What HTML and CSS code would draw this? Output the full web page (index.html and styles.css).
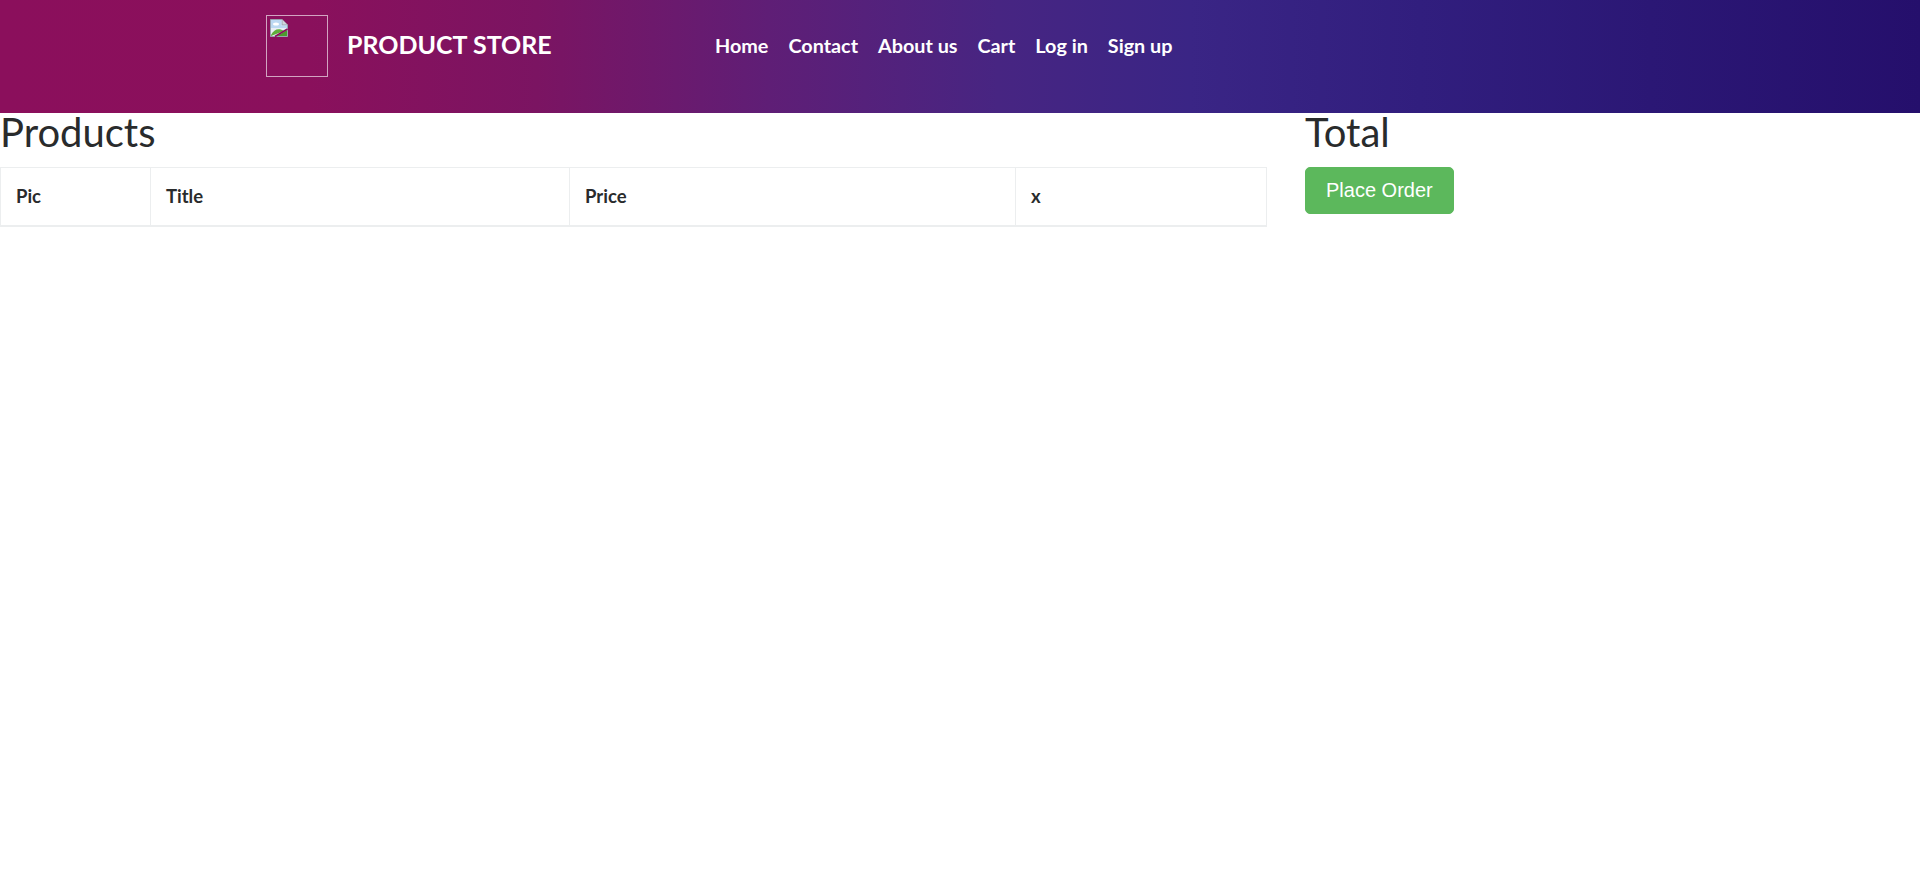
FILE: index.html
```html
<!DOCTYPE html>
<html lang="en">
<head>
<meta charset="utf-8">
<title>STORE</title>
<link rel="stylesheet" href="styles.css">
</head>
<body>
<header class="navbar">
  <a class="brand" href="#">
    <span class="logo-img">
      <svg class="broken" width="20" height="20" viewBox="0 0 20 20" aria-hidden="true">
        <path d="M1.5 1.5 H13 L18.5 7 V18.5 H1.5 Z" fill="#e8eef5" stroke="#9aa3ad" stroke-width="1"/>
        <path d="M13 1.5 V7 H18.5" fill="#d0d6dd" stroke="#9aa3ad" stroke-width="1"/>
        <path d="M2 2 H12.5 V7.5 H18 V10 H2 Z" fill="#bcd8f2"/>
        <ellipse cx="7" cy="6" rx="3" ry="1.6" fill="#ffffff"/>
        <path d="M2 17 C5 11 10 10 15 13 L2 18 Z" fill="#5fae3a"/>
        <path d="M8 18 L18 12 V18 Z" fill="#4d9a2e"/>
        <path d="M6 18.5 L18.5 11" stroke="#8a0f5c" stroke-width="1.6"/>
      </svg>
    </span>
    <span class="brand-text">PRODUCT STORE</span>
  </a>
  <nav class="nav">
    <a class="nav-link" href="#">Home</a>
    <a class="nav-link" href="#">Contact</a>
    <a class="nav-link" href="#">About us</a>
    <a class="nav-link" href="#">Cart</a>
    <a class="nav-link" href="#">Log in</a>
    <a class="nav-link" href="#">Sign up</a>
  </nav>
</header>
<main class="content">
  <section class="products">
    <h2 class="heading">Products</h2>
    <table class="table">
      <colgroup>
        <col class="c-pic">
        <col class="c-title">
        <col class="c-price">
        <col class="c-x">
      </colgroup>
      <thead>
        <tr>
          <th>Pic</th>
          <th>Title</th>
          <th>Price</th>
          <th>x</th>
        </tr>
      </thead>
      <tbody></tbody>
    </table>
  </section>
  <section class="total">
    <h2 class="heading">Total</h2>
    <button class="btn-success" type="button">Place Order</button>
  </section>
</main>
</body>
</html>
```

FILE: styles.css
```css
html, body {
  margin: 0;
  padding: 0;
  background: #ffffff;
}

body {
  font-family: Lato, "Open Sans", sans-serif;
  color: #292b2c;
  width: 1920px;
  min-height: 885px;
}

.navbar {
  height: 113px;
  box-sizing: border-box;
  padding: 15px 0 0 266px;
  display: flex;
  align-items: flex-start;
  background: linear-gradient(to right, #8b0f5c 0%, #8a105c 16%, #7b1462 28%, #5f1e76 40%, #472582 52%, #3a2585 62%, #311e7e 74%, #2b1775 86%, #250f6c 100%);
}

.brand {
  flex: 0 0 439px;
  display: flex;
  align-items: center;
  height: 62px;
  text-decoration: none;
  color: #ffffff;
}

.logo-img {
  width: 62px;
  height: 62px;
  box-sizing: border-box;
  border: 1px solid rgba(255, 255, 255, 0.62);
  display: block;
  padding: 2px 0 0 2px;
}

.broken {
  display: block;
}

.brand-text {
  margin-left: 19px;
  margin-bottom: 5px;
  font-size: 25px;
  font-weight: 700;
  line-height: 38px;
}

.nav {
  display: flex;
  align-items: center;
  height: 62px;
}

.nav-link {
  padding: 0 10px;
  margin-bottom: 3px;
  font-size: 19.8px;
  font-weight: 700;
  line-height: 30px;
  color: #ffffff;
  text-decoration: none;
}

.content {
  display: grid;
  grid-template-columns: 1267px 1fr;
  column-gap: 38px;
}

.heading {
  margin: 0 0 17px;
  padding-top: 1px;
  font-size: 40px;
  font-weight: 400;
  line-height: 36px;
  color: #292b2c;
}

.table {
  width: 100%;
  table-layout: fixed;
  border-collapse: collapse;
  border: 1px solid #eceeef;
}

.c-pic { width: 150px; }
.c-title { width: 419px; }
.c-price { width: 446px; }

.table th {
  padding: 16px 15px;
  font-size: 18.5px;
  font-weight: 700;
  line-height: 25px;
  text-align: left;
  border: 1px solid #eceeef;
  border-bottom: 2px solid #eceeef;
  color: #292b2c;
}

.btn-success {
  font-family: "Liberation Sans", Arial, sans-serif;
  font-size: 20px;
  line-height: 25px;
  padding: 10px 20px;
  color: #ffffff;
  background: #5cb85c;
  border: 1px solid #5cb85c;
  border-radius: 5px;
  cursor: pointer;
}
```
